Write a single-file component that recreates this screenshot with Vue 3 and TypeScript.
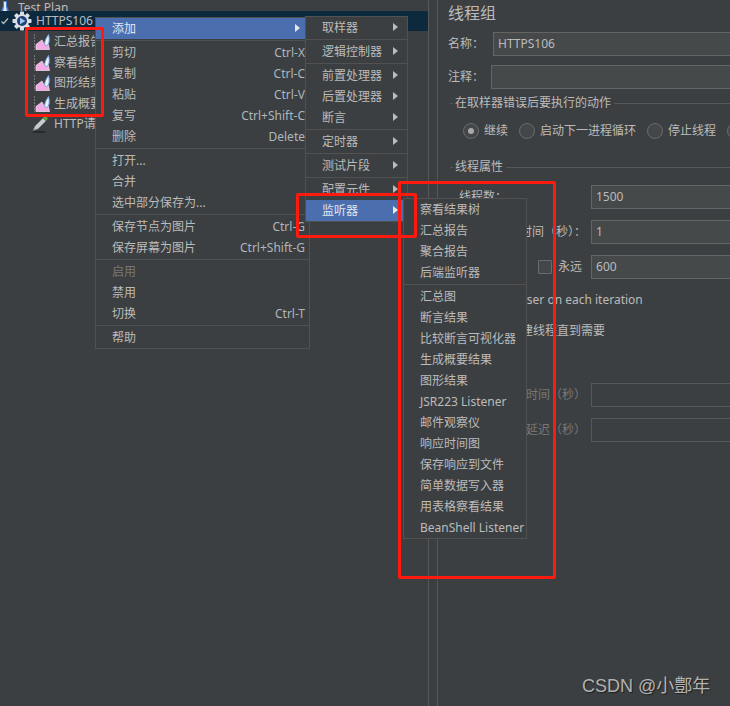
<script setup lang="ts">
interface Row { label?: string; key?: string; sep?: boolean; arrow?: boolean; active?: boolean; disabled?: boolean; latin?: boolean }

const mainMenu: Row[] = [
  { label: '添加', arrow: true, active: true }, { sep: true },
  { label: '剪切', key: 'Ctrl-X' }, { label: '复制', key: 'Ctrl-C' }, { label: '粘贴', key: 'Ctrl-V' },
  { label: '复写', key: 'Ctrl+Shift-C' }, { label: '删除', key: 'Delete' }, { sep: true },
  { label: '打开...' }, { label: '合并' }, { label: '选中部分保存为...' }, { sep: true },
  { label: '保存节点为图片', key: 'Ctrl-G' }, { label: '保存屏幕为图片', key: 'Ctrl+Shift-G' }, { sep: true },
  { label: '启用', disabled: true }, { label: '禁用' }, { label: '切换', key: 'Ctrl-T' }, { sep: true },
  { label: '帮助' },
]
const addMenu: Row[] = [
  { label: '取样器', arrow: true }, { sep: true },
  { label: '逻辑控制器', arrow: true }, { sep: true },
  { label: '前置处理器', arrow: true }, { label: '后置处理器', arrow: true }, { label: '断言', arrow: true }, { sep: true },
  { label: '定时器', arrow: true }, { sep: true },
  { label: '测试片段', arrow: true }, { sep: true },
  { label: '配置元件', arrow: true }, { label: '监听器', arrow: true, active: true },
]
const listenerMenu: Row[] = [
  { label: '察看结果树' }, { label: '汇总报告' }, { label: '聚合报告' }, { label: '后端监听器' }, { sep: true },
  { label: '汇总图' }, { label: '断言结果' }, { label: '比较断言可视化器' }, { label: '生成概要结果' }, { label: '图形结果' },
  { label: 'JSR223 Listener' }, { label: '邮件观察仪' }, { label: '响应时间图' }, { label: '保存响应到文件' },
  { label: '简单数据写入器' }, { label: '用表格察看结果' }, { label: 'BeanShell Listener' },
]
const listeners = ['汇总报告', '察看结果树', '图形结果', '生成概要结果']
const menus = [
  { id: 'main', rows: mainMenu },
  { id: 'add', rows: addMenu },
  { id: 'listener', rows: listenerMenu },
]
const radios = [
  { label: '继续', on: true }, { label: '启动下一进程循环', on: false },
  { label: '停止线程', on: false }, { label: '停止测试', on: false },
]
</script>

<template>
  <div class="app">
    <aside class="tree">
      <div class="node plan">
        <svg class="flask" width="10" height="16" viewBox="0 0 10 16">
          <path d="M3 0h4v5l3 8H0l3-8z" fill="#3f7fd8" />
          <path d="M4 1h2v5l1 4H3l1-4z" fill="#dfe9f7" />
        </svg>
        <span>Test Plan</span>
      </div>
      <div class="node group">
        <svg class="chevron" width="8" height="8" viewBox="0 0 8 8">
          <path d="M0.5 4.5 2.5 6.5 7 1.5" fill="none" stroke="#bbb" stroke-width="1.3" />
        </svg>
        <svg class="gear" width="20" height="20" viewBox="0 0 20 20">
          <g fill="#dcdfe3">
            <circle cx="10" cy="10" r="7" />
            <rect x="8" y="0.5" width="4" height="19" rx="0.8" />
            <rect x="8" y="0.5" width="4" height="19" rx="0.8" transform="rotate(45 10 10)" />
            <rect x="8" y="0.5" width="4" height="19" rx="0.8" transform="rotate(90 10 10)" />
            <rect x="8" y="0.5" width="4" height="19" rx="0.8" transform="rotate(135 10 10)" />
          </g>
          <circle cx="10" cy="10" r="5" fill="#1f3f78" />
          <path d="M8 6.8 13.4 10 8 13.2z" fill="#9fc6ee" />
        </svg>
        <span>HTTPS106</span>
      </div>
      <div v-for="name in listeners" :key="name" class="node child">
        <svg width="18" height="18" viewBox="0 0 18 18">
          <path d="M1.5 1v16" stroke="#77787a" stroke-width="1" stroke-dasharray="2 1" />
          <path d="M3 16.5V11.5L9 7l2 4 4-1 1.5 6.5z" fill="#f4a9e4" stroke="#f3e2f0" stroke-width="0.7" />
          <path d="M15.5 1.5C16.8 6 16.5 11.5 13.5 12.5 11 12.5 10.5 9 15.5 1.5z" fill="#e9f1fb" stroke="#6f9fdc" stroke-width="1" />
        </svg>
        <span>{{ name }}</span>
      </div>
      <div class="node child http">
        <svg width="18" height="20" viewBox="0 0 18 20">
          <ellipse cx="7" cy="18" rx="7" ry="1.1" fill="#26282a" />
          <path d="M1 16.5 3 12 11 4l3 3-8 8z" fill="#c9cbce" stroke="#6a6d70" stroke-width="0.7" />
          <path d="M11 4l2-2.5 3 3L14 7z" fill="#58a83f" />
        </svg>
        <span>HTTP请求</span>
      </div>
    </aside>

    <main class="form">
      <h1 class="title">线程组</h1>
      <div class="field name-field"><label>名称：</label><div class="input">HTTPS106</div></div>
      <div class="field comment-field"><label>注释：</label><div class="input"></div></div>

      <div class="legend on-error"><i class="stub"></i><span>在取样器错误后要执行的动作</span><i class="rule"></i></div>
      <div class="radios">
        <div v-for="r in radios" :key="r.label" class="radio-item">
          <span class="radio" :class="{ on: r.on }"></span><span>{{ r.label }}</span>
        </div>
      </div>

      <div class="legend props"><i class="stub"></i><span>线程属性</span><i class="rule"></i></div>
      <div class="field prop first"><label class="left">线程数：</label><div class="input">1500</div></div>
      <div class="field prop"><label>Ramp-Up时间（秒）：</label><div class="input">1</div></div>
      <div class="field prop">
        <label class="loop-label">循环次数</label>
        <span class="check"></span><span class="forever">永远</span>
        <div class="input">600</div>
      </div>
      <div class="option same-user">Same user on each iteration</div>
      <div class="option delay">延迟创建线程直到需要</div>
      <div class="field prop duration disabled"><label>持续时间（秒）</label><div class="input"></div></div>
      <div class="field prop disabled"><label>启动延迟（秒）</label><div class="input"></div></div>
    </main>

    <div v-for="m in menus" :key="m.id" class="menu" :class="m.id">
      <template v-for="(row, i) in m.rows" :key="i">
        <div v-if="row.sep" class="sep"></div>
        <div v-else class="item" :class="{ active: row.active, disabled: row.disabled }">
          <span>{{ row.label }}</span>
          <span v-if="row.key" class="key">{{ row.key }}</span>
          <i v-if="row.arrow" class="arrow"></i>
        </div>
      </template>
    </div>

    <div class="mark box-tree"></div>
    <div class="mark box-item"></div>
    <div class="mark box-list"></div>
    <div class="watermark">CSDN @小鄷年</div>
  </div>
</template>

<style>
html, body { margin: 0; background: #3c3f41; }
</style>

<style scoped>
.app {
  position: relative;
  display: flex;
  width: 730px;
  height: 706px;
  overflow: hidden;
  background: #3c3f41;
  color: #bbbbbb;
  font: 12px/16px "Noto Sans", "Noto Sans CJK SC", sans-serif;
}
.tree {
  flex: none;
  width: 428px;
  height: 706px;
  margin-right: 8px;
  border-right: 1px solid #555759;
  box-sizing: content-box;
  margin-top: 0;
}
.node { display: flex; align-items: center; height: 20.5px; white-space: nowrap; }
.plan { height: 11px; padding-left: 0; gap: 8px; align-items: flex-end; overflow: hidden; }
.plan span { line-height: 12px; transform: translateY(3px); }
.flask { margin-bottom: -6px; flex: none; }
.group { height: 20px; background: #0d293e; padding-left: 1px; }
.chevron { margin-right: 3px; }
.gear { margin-right: 4px; }
.child { padding-left: 33px; gap: 3px; }
.child:nth-child(3) { margin-top: 1px; }
.http { height: 19px; padding-left: 32px; gap: 4px; }

.form {
  flex: 1;
  min-width: 0;
  padding-left: 10px;
  border-left: 1px solid #555759;
  overflow: hidden;
  white-space: nowrap;
}
.title { margin: 2px 0 0; font-size: 16px; line-height: 22px; font-weight: 400; }
.field { display: flex; align-items: center; height: 24px; }
.field label { flex: none; }
.input {
  flex: 1;
  height: 24px;
  box-sizing: border-box;
  padding-left: 4px;
  line-height: 22px;
  background: #45494a;
  border: 1px solid #646464;
  border-right: 0;
}
.name-field { margin-top: 8px; }
.name-field label { width: 45px; }
.comment-field { margin-top: 9px; }
.comment-field label { width: 43px; }
.legend { display: flex; align-items: center; height: 16px; }
.legend .stub { width: 3px; height: 1px; margin: 0 2px; background: #555759; }
.legend .rule { flex: 1; height: 1px; margin-left: 3px; background: #555759; }
.on-error { margin-top: 6px; }
.radios { display: flex; gap: 11px; height: 20px; margin-top: 10px; padding-left: 15px; }
.radio-item { display: flex; align-items: center; gap: 5px; }
.radio {
  position: relative;
  width: 16px;
  height: 16px;
  box-sizing: border-box;
  border: 1px solid #6b6b6b;
  border-radius: 50%;
  background: #43474a;
}
.radio.on::after {
  content: "";
  position: absolute;
  left: 4px;
  top: 4px;
  width: 6px;
  height: 6px;
  border-radius: 50%;
  background: #a9a9a9;
}
.props { margin-top: 18px; }
.prop { margin-top: 11px; }
.prop.first { margin-top: 10px; }
.prop label { width: 138px; padding-right: 5px; text-align: right; }
.prop label.left { padding-left: 11px; width: 127px; text-align: left; }
.prop label.loop-label { width: 79px; padding: 0 0 0 11px; text-align: left; }
.check {
  flex: none;
  width: 14px;
  height: 14px;
  box-sizing: border-box;
  border: 1px solid #6b6b6b;
  background: #43474a;
  border-radius: 1px;
}
.forever { flex: none; margin: 0 9px 0 6px; }
.option { height: 20px; line-height: 20px; padding-left: 37px; }
.same-user { margin-top: 11px; }
.delay { margin-top: 11px; }
.duration { margin-top: 42px; }
.disabled label { color: #777777; }
.disabled .input { background: transparent; border-color: #555759; }

.menu {
  position: absolute;
  box-sizing: border-box;
  background: #3c3f41;
  border: 1px solid #515151;
  white-space: nowrap;
}
.menu.main { left: 95px; top: 17px; width: 215px; }
.menu.add { left: 305px; top: 16px; width: 103px; }
.menu.listener { left: 403px; top: 198px; width: 124px; }
.item {
  position: relative;
  display: flex;
  align-items: center;
  justify-content: space-between;
  height: 21px;
  padding: 0 4px 0 16px;
}
.item.active { background: #4b6eaf; color: #e2e6ee; }
.item.disabled { color: #777777; }
.sep { height: 1px; margin: 1px 0; background: #515151; }
.key { color: #aeb6bd; }
.arrow {
  position: absolute;
  right: 9px;
  top: 6px;
  border-left: 5px solid #bbbbbb;
  border-top: 4.5px solid transparent;
  border-bottom: 4.5px solid transparent;
}
.item.active .arrow { border-left-color: #e8e8e8; }
.main .arrow { right: 9px; }
.add .arrow { right: 9px; }

.mark {
  position: absolute;
  box-sizing: border-box;
  border: 3px solid #ff1a10;
  border-radius: 2px;
}
.box-tree { left: 25px; top: 27px; width: 79px; height: 90px; }
.box-item { left: 296px; top: 193px; width: 121px; height: 45px; }
.box-list { left: 398px; top: 181px; width: 158px; height: 398px; }
.watermark {
  position: absolute;
  left: 582px;
  top: 675px;
  font: 18px/22px "Liberation Sans", "Noto Sans CJK SC", sans-serif;
  color: #b2b2b2;
  text-shadow: 1px 1px 1px #1e1e1e;
  white-space: nowrap;
}
</style>
